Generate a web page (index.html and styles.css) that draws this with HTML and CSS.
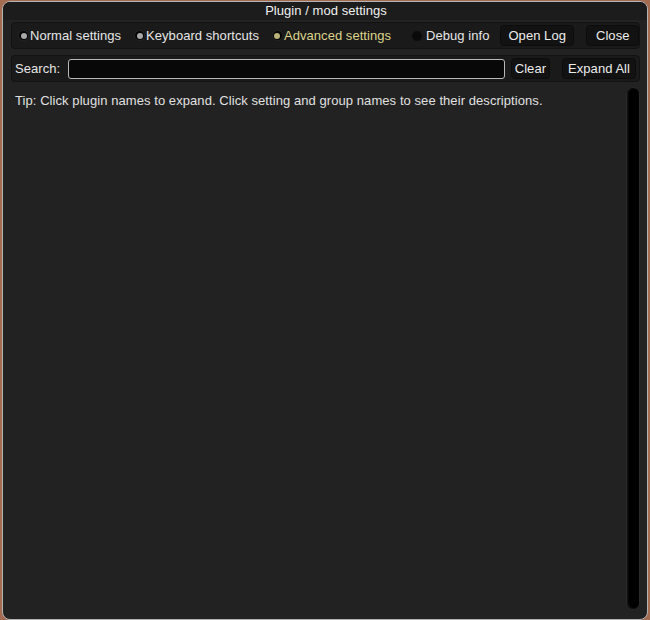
FILE: index.html
```html
<!DOCTYPE html>
<html>
<head>
<meta charset="utf-8">
<link rel="stylesheet" href="styles.css">
</head>
<body>
<div class="window">
  <div class="title">Plugin / mod settings</div>
  <div class="content">
    <div class="panel tabs">
      <label class="radio"><span class="dot"></span>Normal settings</label>
      <label class="radio"><span class="dot"></span>Keyboard shortcuts</label>
      <label class="radio active"><span class="dot"></span>Advanced settings</label>
      <label class="check"><span class="box"></span>Debug info</label>
      <span class="btn openlog">Open Log</span>
      <span class="btn close">Close</span>
    </div>
    <div class="panel search">
      <span class="slabel">Search:</span>
      <span class="input"></span>
      <span class="btn clear">Clear</span>
      <span class="btn expand">Expand All</span>
    </div>
    <div class="main">
      <div class="tip">Tip: Click plugin names to expand. Click setting and group names to see their descriptions.</div>
      <div class="scroll"></div>
    </div>
  </div>
</div>
</body>
</html>
```
FILE: styles.css
```css
html, body {
  margin: 0;
  padding: 0;
}
body {
  width: 650px;
  height: 620px;
  background: #a46d52;
  font-family: "Liberation Sans", Arial, sans-serif;
  font-size: 13px;
  letter-spacing: 0.05px;
  color: #e6e6e6;
  overflow: hidden;
}
.window {
  margin: 1px 0 0 2px;
  width: 644px;
  height: 617px;
  border: 1px solid #b4b4b4;
  border-radius: 8px;
  background: #222222;
  display: flex;
  flex-direction: column;
  overflow: hidden;
}
.title {
  height: 18px;
  line-height: 17px;
  text-align: center;
  background: #1c1c1c;
  color: #f0f0f0;
  padding-left: 2px;
}
.content {
  flex: 1;
  display: flex;
  flex-direction: column;
  padding: 2px 7px 7px 8px;
  gap: 6px;
}
.panel {
  height: 25px;
  background: #1a1a1a;
  border: 1px solid #121212;
  border-radius: 4px;
  display: flex;
  align-items: center;
}
.tabs {
  padding: 0 3px 0 6px;
}
.radio, .check {
  display: flex;
  align-items: center;
  white-space: nowrap;
}
.radio {
  margin-right: 13px;
}
.radio.active { margin-right: 20px; color: #dcd48c; }
.dot {
  width: 9px;
  height: 9px;
  border-radius: 50%;
  background: #050505;
  border: 1px solid #262626;
  margin-right: 1px;
  display: flex;
  align-items: center;
  justify-content: center;
}
.dot::after {
  content: "";
  width: 6px;
  height: 6px;
  border-radius: 50%;
  background: #a8a8a8;
}
.active .dot::after {
  background: #bab27a;
}
.box {
  width: 10px;
  height: 10px;
  border-radius: 50%;
  background: #0a0a0a;
  border: 1px solid #1c1c1c;
  margin-right: 3px;
}
.check {
  margin-right: 11px;
}
.btn {
  height: 19px;
  line-height: 19px;
  padding: 0 7px;
  background: #121212;
  border: 1px solid #0c0c0c;
  border-radius: 4px;
  color: #ececec;
  white-space: nowrap;
}
.openlog {
  margin-right: 12px;
}
.close {
  padding: 0 9px;
}
.search {
  padding: 0 3px 0 3px;
}
.slabel {
  margin-right: 8px;
}
.input {
  flex: 1;
  height: 18px;
  background: #080808;
  border: 1px solid #b8b8b8;
  border-radius: 3px;
  margin-right: 6px;
}
.search .clear {
  padding: 0 3px;
}
.search .expand {
  margin-left: 12px;
  padding: 0 5px;
}
.main {
  flex: 1;
  display: flex;
}
.tip {
  flex: 1;
  padding: 5px 0 0 4px;
  color: #e0e0e0;
  letter-spacing: 0.07px;
}
.scroll {
  width: 12px;
  margin: -1px 0 0 0;
  height: 521px;
  background: #000;
  border: 1px solid #2a2a2a;
  border-radius: 7px;
  box-shadow: inset 1px 0 2px #1a1a1a;
}
```
